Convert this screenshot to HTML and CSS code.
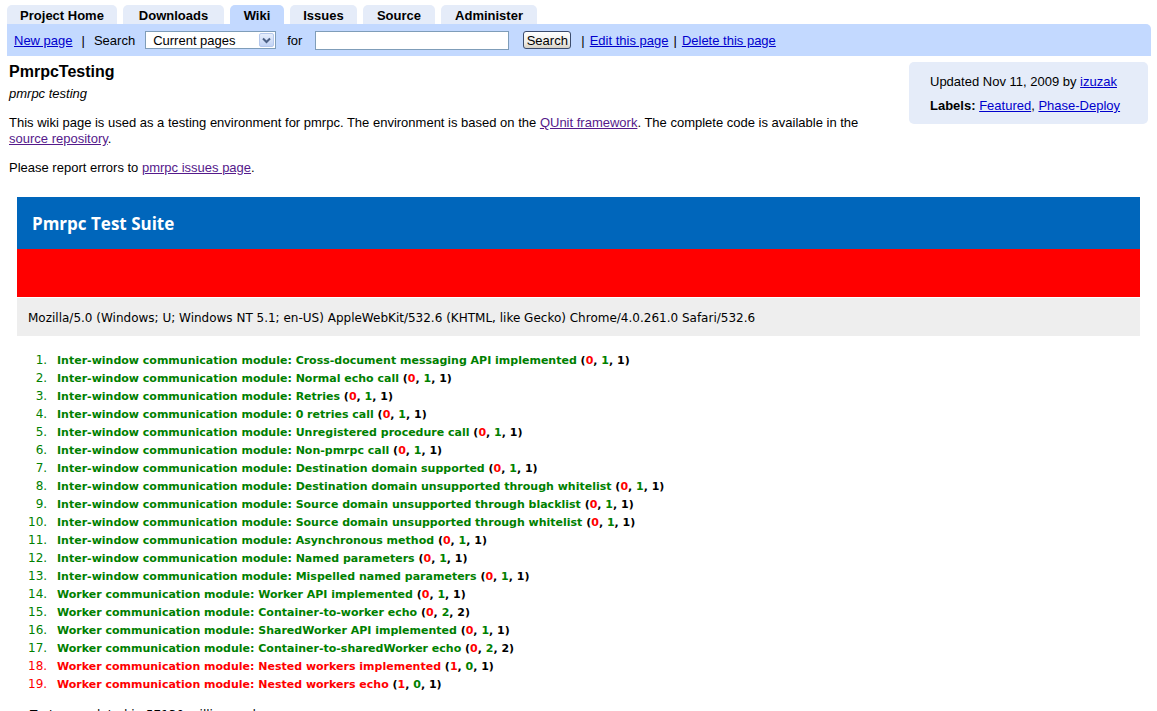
FILE: index.html
```html
<!DOCTYPE html>
<html>
<head>
<meta charset="utf-8">
<link rel="stylesheet" href="styles.css">
</head>
<body>
<div class="tabs">
  <span class="tab t-home">Project Home</span>
  <span class="tab t-down">Downloads</span>
  <span class="tab t-wiki active">Wiki</span>
  <span class="tab t-issues">Issues</span>
  <span class="tab t-source">Source</span>
  <span class="tab t-admin">Administer</span>
</div>
<div class="searchbar">
  <a href="#" class="link">New page</a>
  <span class="sep">|</span>
  <span class="lbl">Search</span>
  <span class="selectwrap">
    <span class="selecttext">Current pages</span>
    <span class="selectbtn"><svg width="9" height="7" viewBox="0 0 9 7"><path d="M1 1.5 L4.5 5 L8 1.5" fill="none" stroke="#4d6185" stroke-width="2"/></svg></span>
  </span>
  <span class="lbl">for</span>
  <span class="textinput"></span>
  <span class="btn">Search</span>
  <span class="sep2">|</span>
  <a href="#" class="link">Edit this page</a>
  <span class="sep3">|</span>
  <a href="#" class="link">Delete this page</a>
</div>
<div class="wrap">
  <div class="main">
    <h1 class="title">PmrpcTesting</h1>
    <div class="summary">pmrpc testing</div>
    <p class="para">This wiki page is used as a testing environment for pmrpc. The environment is based on the <a href="#" class="visited">QUnit framework</a>. The complete code is available in the <a href="#" class="visited">source repository</a>.</p>
    <p class="para">Please report errors to <a href="#" class="visited">pmrpc issues page</a>.</p>
  </div>
  <div class="side">
    <div class="side-line">Updated Nov 11, 2009 by <a href="#" class="link">izuzak</a></div>
    <div class="side-line"><b>Labels:</b> <a href="#" class="link">Featured</a>, <a href="#" class="link">Phase-Deploy</a></div>
  </div>
</div>
<div class="suite">
  <div class="suite-header">Pmrpc Test Suite</div>
  <div class="suite-banner"></div>
  <div class="suite-ua">Mozilla/5.0 (Windows; U; Windows NT 5.1; en-US) AppleWebKit/532.6 (KHTML, like Gecko) Chrome/4.0.261.0 Safari/532.6</div>
  <ol class="tests">
    <li class="pass"><strong>Inter-window communication module: Cross-document messaging API implemented <b class="counts">(<b class="f">0</b>, <b class="p">1</b>, 1)</b></strong></li>
    <li class="pass"><strong>Inter-window communication module: Normal echo call <b class="counts">(<b class="f">0</b>, <b class="p">1</b>, 1)</b></strong></li>
    <li class="pass"><strong>Inter-window communication module: Retries <b class="counts">(<b class="f">0</b>, <b class="p">1</b>, 1)</b></strong></li>
    <li class="pass"><strong>Inter-window communication module: 0 retries call <b class="counts">(<b class="f">0</b>, <b class="p">1</b>, 1)</b></strong></li>
    <li class="pass"><strong>Inter-window communication module: Unregistered procedure call <b class="counts">(<b class="f">0</b>, <b class="p">1</b>, 1)</b></strong></li>
    <li class="pass"><strong>Inter-window communication module: Non-pmrpc call <b class="counts">(<b class="f">0</b>, <b class="p">1</b>, 1)</b></strong></li>
    <li class="pass"><strong>Inter-window communication module: Destination domain supported <b class="counts">(<b class="f">0</b>, <b class="p">1</b>, 1)</b></strong></li>
    <li class="pass"><strong>Inter-window communication module: Destination domain unsupported through whitelist <b class="counts">(<b class="f">0</b>, <b class="p">1</b>, 1)</b></strong></li>
    <li class="pass"><strong>Inter-window communication module: Source domain unsupported through blacklist <b class="counts">(<b class="f">0</b>, <b class="p">1</b>, 1)</b></strong></li>
    <li class="pass"><strong>Inter-window communication module: Source domain unsupported through whitelist <b class="counts">(<b class="f">0</b>, <b class="p">1</b>, 1)</b></strong></li>
    <li class="pass"><strong>Inter-window communication module: Asynchronous method <b class="counts">(<b class="f">0</b>, <b class="p">1</b>, 1)</b></strong></li>
    <li class="pass"><strong>Inter-window communication module: Named parameters <b class="counts">(<b class="f">0</b>, <b class="p">1</b>, 1)</b></strong></li>
    <li class="pass"><strong>Inter-window communication module: Mispelled named parameters <b class="counts">(<b class="f">0</b>, <b class="p">1</b>, 1)</b></strong></li>
    <li class="pass"><strong>Worker communication module: Worker API implemented <b class="counts">(<b class="f">0</b>, <b class="p">1</b>, 1)</b></strong></li>
    <li class="pass"><strong>Worker communication module: Container-to-worker echo <b class="counts">(<b class="f">0</b>, <b class="p">2</b>, 2)</b></strong></li>
    <li class="pass"><strong>Worker communication module: SharedWorker API implemented <b class="counts">(<b class="f">0</b>, <b class="p">1</b>, 1)</b></strong></li>
    <li class="pass"><strong>Worker communication module: Container-to-sharedWorker echo <b class="counts">(<b class="f">0</b>, <b class="p">2</b>, 2)</b></strong></li>
    <li class="fail"><strong>Worker communication module: Nested workers implemented <b class="counts">(<b class="f">1</b>, <b class="p">0</b>, 1)</b></strong></li>
    <li class="fail"><strong>Worker communication module: Nested workers echo <b class="counts">(<b class="f">1</b>, <b class="p">0</b>, 1)</b></strong></li>
  </ol>
  <div class="result">Tests completed in 57130 milliseconds.</div>
</div>
</body>
</html>
```
FILE: styles.css
```css
html, body {
  margin: 0;
  padding: 0;
  background: #ffffff;
}
body {
  font-family: "Liberation Sans", Arial, sans-serif;
  font-size: 13px;
  color: #000000;
  overflow: hidden;
}
a { color: #0000cc; text-decoration: underline; }
a.visited { color: #551a8b; }

.tabs {
  display: flex;
  gap: 6px;
  padding: 5px 0 0 7px;
}
.tab {
  height: 19px;
  box-sizing: border-box;
  padding-top: 3px;
  line-height: 16px;
  font-weight: bold;
  text-align: center;
  background: #e5ecf9;
  border-radius: 5px 5px 0 0;
}
.t-home { width: 110px; }
.t-down { width: 101px; }
.t-wiki { width: 54px; }
.t-issues { width: 67px; }
.t-source { width: 72px; }
.t-admin { width: 96px; }
.tab.active { background: #c3d9ff; }

.searchbar {
  display: flex;
  align-items: center;
  height: 32px;
  margin: 0 6px 0 7px;
  padding: 0 0 0 7px;
  background: #c3d9ff;
  border-top-right-radius: 5px;
  white-space: nowrap;
}
.sep { margin: 0 9px 0 9px; }
.lbl { margin-right: 10px; }
.selectwrap {
  position: relative;
  display: flex;
  align-items: center;
  width: 131px;
  height: 18px;
  box-sizing: border-box;
  background: #fff;
  border: 1px solid #7f9db9;
  margin-right: 11px;
}
.selecttext { padding-left: 7px; font-size: 13px; }
.selectbtn {
  position: absolute;
  right: 1px;
  top: 1px;
  width: 15px;
  height: 14px;
  box-sizing: border-box;
  border: 1px solid #b5c8ec;
  border-radius: 2px;
  background: linear-gradient(#e6eefc, #c2d3f5);
  display: flex;
  align-items: center;
  justify-content: center;
}
.textinput {
  display: block;
  width: 194px;
  height: 19px;
  box-sizing: border-box;
  background: #fff;
  border: 1px solid #7f9db9;
  margin-left: 3px;
  margin-right: 14px;
}
.btn {
  display: flex;
  align-items: center;
  justify-content: center;
  width: 48px;
  height: 18px;
  box-sizing: border-box;
  border: 1px solid #3c4c6c;
  border-radius: 3px;
  background: linear-gradient(#ffffff, #ecebe6 70%, #d6d0c5);
  font-size: 13px;
  margin-right: 10px;
}
.sep2 { margin-right: 5px; }
.sep3 { margin: 0 5px 0 5px; }

.wrap {
  display: flex;
  align-items: flex-start;
  padding: 0 9px 0 9px;
}
.main {
  width: 876px;
  flex: none;
}
.title {
  margin: 6px 0 0;
  font-size: 16px;
  line-height: 20px;
  font-weight: bold;
}
.summary {
  margin-top: 4px;
  font-style: italic;
  line-height: 16px;
}
.para {
  margin: 13px 0 0;
  line-height: 16px;
}
.side {
  margin: 6px 0 0 24px;
  width: 239px;
  height: 62px;
  box-sizing: border-box;
  background: #e5ecf9;
  border-radius: 5px;
  padding: 8px 0 0 21px;
}
.side-line { line-height: 24px; }

.suite {
  margin: 21px 17px 0 17px;
}
.suite-header {
  height: 52px;
  background: #0066bb;
  color: #ffffff;
  font-family: "Open Sans", "DejaVu Sans", sans-serif;
  font-weight: bold;
  font-size: 17px;
  line-height: 54px;
  padding-left: 15px;
}
.suite-banner {
  height: 48px;
  background: #ff0000;
  border-bottom: 1px solid #ffffff;
}
.suite-ua {
  height: 38px;
  background: #eeeeee;
  font-family: "DejaVu Sans", Verdana, sans-serif;
  font-size: 12px;
  line-height: 40px;
  padding-left: 11px;
  color: #000;
}
.tests {
  margin: 15px 0 0;
  padding-left: 34px;
  font-family: "DejaVu Sans", Verdana, sans-serif;
  font-size: 12px;
  line-height: 18px;
}
.tests li { padding-left: 6px; height: 18px; }
.tests li.pass { color: #008000; }
.tests li.fail { color: #ff0000; }
.tests strong { font-weight: bold; font-size: 11px; line-height: 14px; }
.counts { color: #000000; }
.counts .f { color: #ff0000; }
.counts .p { color: #008000; }
.result {
  margin-top: 14px;
  padding-left: 13px;
  font-family: "DejaVu Sans", Verdana, sans-serif;
  font-size: 12px;
  line-height: 16px;
}
```
